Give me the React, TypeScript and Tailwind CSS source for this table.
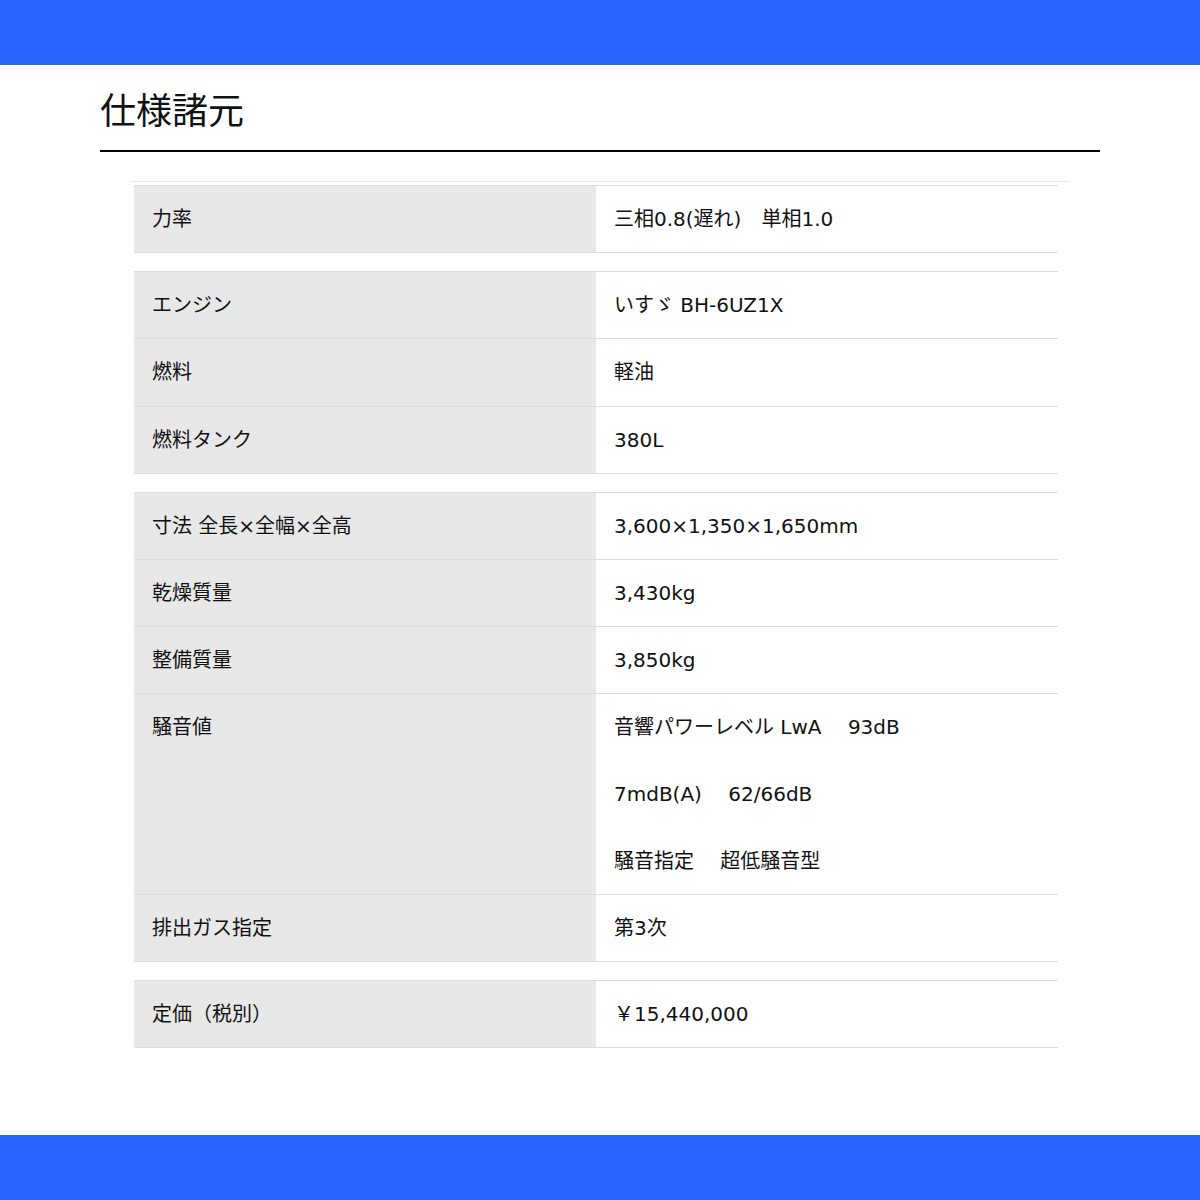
import React from 'react';

type Row = { label: string; values: string[] };

const groups: Row[][] = [
  [{ label: '力率', values: ['三相0.8(遅れ)　単相1.0'] }],
  [
    { label: 'エンジン', values: ['いすゞ BH-6UZ1X'] },
    { label: '燃料', values: ['軽油'] },
    { label: '燃料タンク', values: ['380L'] },
  ],
  [
    { label: '寸法 全長×全幅×全高', values: ['3,600×1,350×1,650mm'] },
    { label: '乾燥質量', values: ['3,430kg'] },
    { label: '整備質量', values: ['3,850kg'] },
    { label: '騒音値', values: ['音響パワーレベル LwA　 93dB', '7mdB(A)　 62/66dB', '騒音指定　 超低騒音型'] },
    { label: '排出ガス指定', values: ['第3次'] },
  ],
  [{ label: '定価（税別）', values: ['￥15,440,000'] }],
];

const SpecTable: React.FC<{ rows: Row[] }> = ({ rows }) => (
  <div className="border-t border-[#dddddd] mb-[18px]">
    {rows.map((row, idx) => (
      <div key={idx} className="grid grid-cols-2 border-b border-[#dddddd]">
        <div className="bg-[#e8e8e8] px-[18px] py-[18px] leading-[30.2px]">{row.label}</div>
        <div className="px-[18px] py-[18px] leading-[30.2px]">
          {row.values.map((v, i) => (
            <p key={i} className={i > 0 ? 'mt-[36.5px]' : ''}>{v}</p>
          ))}
        </div>
      </div>
    ))}
  </div>
);

export default function App() {
  return (
    <div
      className="h-[1200px] flex flex-col bg-white text-[#111111]"
      style={{ fontFamily: '"DejaVu Sans", "Noto Sans CJK JP", sans-serif' }}
    >
      <div className="h-[65px] bg-[#2966ff] shrink-0"></div>
      <main className="flex-1">
        <div className="w-[1000px] mx-auto">
          <h1 className="text-[36px] leading-[54px] pt-[20px] pb-[11px] border-b-2 border-black font-normal">
            仕様諸元
          </h1>
          <div className="mt-[29px] ml-[30px] w-[940px] border-t border-[#e6e6e6] pt-[3px] pl-[4px] pr-[12px] text-[20px]">
            {groups.map((rows, idx) => (
              <SpecTable key={idx} rows={rows} />
            ))}
          </div>
        </div>
      </main>
      <div className="h-[65px] bg-[#2966ff] shrink-0"></div>
    </div>
  );
}
